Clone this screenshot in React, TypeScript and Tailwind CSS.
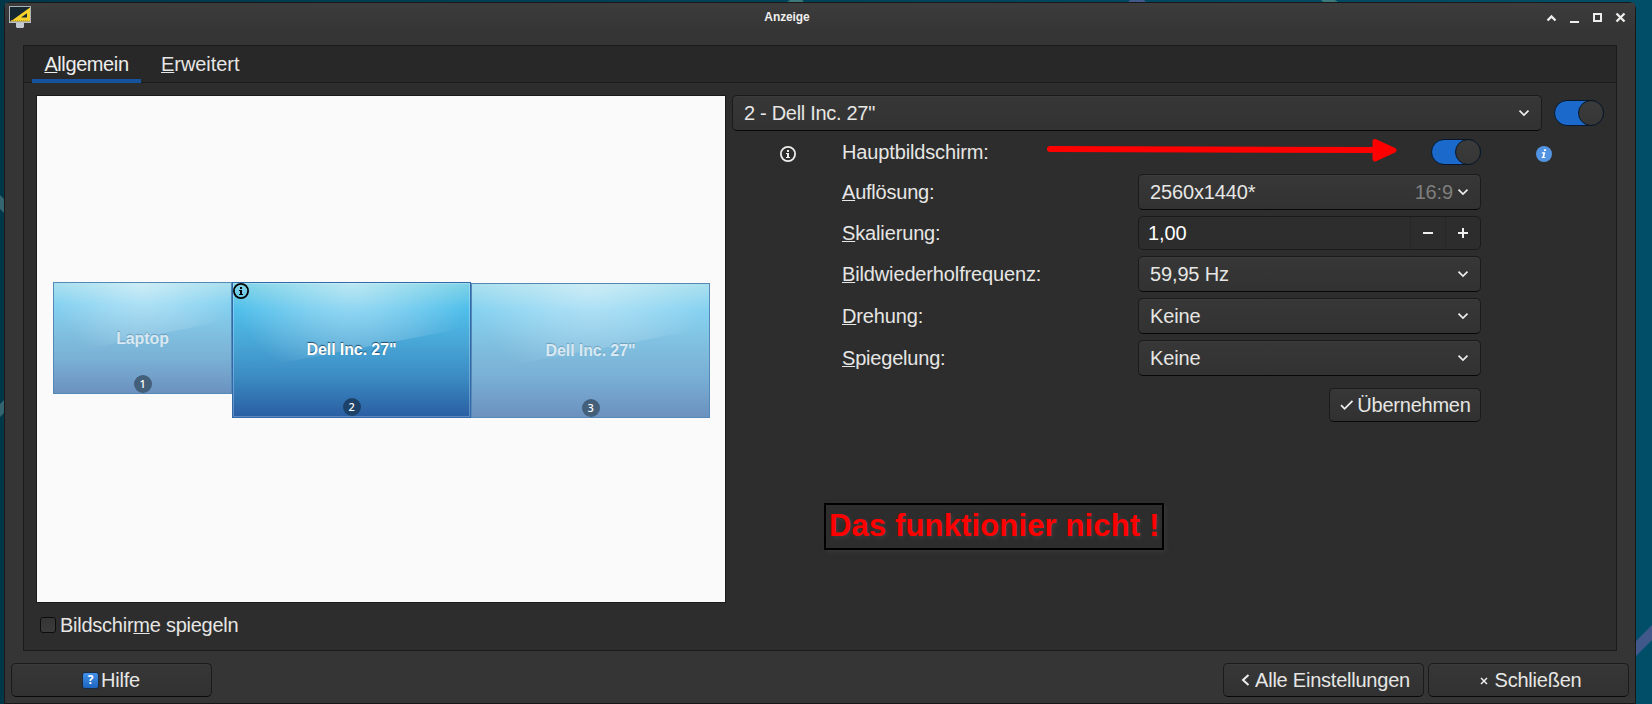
import React, { useState } from 'react';

interface ComboProps {
  value: string;
  hint?: string;
  className?: string;
}

const Chevron: React.FC = () => (
  <svg width="12" height="8" viewBox="0 0 12 8" fill="none" className="shrink-0">
    <path d="M1.5 1.7 L6 6 L10.5 1.7" stroke="#eeeeec" strokeWidth="1.7" />
  </svg>
);

const Combo: React.FC<ComboProps> = ({ value, hint, className = '' }) => (
  <button
    type="button"
    className={`flex h-9 items-center rounded-[5px] border border-[#1b1b1b] border-b-[#070707] bg-linear-to-b from-[#373737] to-[#323232] pr-[11px] pl-[11px] text-left shadow-[inset_0_1px_#3b3b3b] ${className}`}
  >
    <span className="flex-1">{value}</span>
    {hint && <span className="mr-[4px] text-[#7f7f7e]">{hint}</span>}
    <Chevron />
  </button>
);

const Switch: React.FC<{ className?: string }> = ({ className = '' }) => {
  const [on, setOn] = useState(true);
  return (
    <button
      type="button"
      onClick={() => setOn(!on)}
      className={`flex h-[26px] w-[50px] shrink-0 rounded-full border border-[#07172c] ${on ? 'justify-end bg-[#1b6acb]' : 'justify-start bg-[#262626]'} ${className}`}
    >
      <span className="-m-px size-[26px] rounded-full border border-[#0a1624] bg-linear-to-b from-[#3b3b3b] to-[#363636]" />
    </button>
  );
};

const InfoIcon: React.FC<{ color: string }> = ({ color }) => (
  <svg width="16" height="16" viewBox="0 0 16 16" className="block">
    <circle cx="8" cy="8" r="7.1" fill="none" stroke={color} strokeWidth="1.8" />
    <path d="M7 4h2v2H7z M6 7h3v4h1v1H6v-1h1V8H6z" fill={color} />
  </svg>
);

const Label: React.FC<{ text: string; className?: string }> = ({ text, className = '' }) => (
  <div className={className}>
    <span className="underline decoration-1 underline-offset-[1px]">{text[0]}</span>
    {text.slice(1)}
  </div>
);

interface MonitorProps {
  id: number;
  name: string;
  active?: boolean;
  className: string;
}

const Monitor: React.FC<MonitorProps> = ({ id, name, active, className }) => (
  <div className={`relative flex items-center justify-center ${className}`}>
    <svg className="absolute inset-0 size-full" viewBox="0 0 239 136" preserveAspectRatio="none">
      <defs>
        <linearGradient id={`sky${id}`} x1="0" y1="0" x2="0" y2="1">
          <stop offset="0" stopColor={active ? '#7fd3e6' : '#abe0ee'} />
          <stop offset="0.2" stopColor={active ? '#50bfeb' : '#86d2f1'} />
          <stop offset="0.45" stopColor={active ? '#48a6d6' : '#80c0e0'} />
          <stop offset="0.7" stopColor={active ? '#3b8bc2' : '#79afd4'} />
          <stop offset="1" stopColor={active ? '#295da2' : '#6b90bf'} />
        </linearGradient>
        <radialGradient id={`glow${id}`} cx="0.5" cy="0" r="0.5" gradientTransform="scale(1 2.3)">
          <stop offset="0" stopColor="#ffffff" stopOpacity={active ? 0.48 : 0.42} />
          <stop offset="0.5" stopColor="#ffffff" stopOpacity={active ? 0.25 : 0.2} />
          <stop offset="1" stopColor="#ffffff" stopOpacity="0" />
        </radialGradient>
      </defs>
      <rect width="239" height="136" fill={`url(#sky${id})`} />
      <path d="M0 0H239V45Q150 62 0 90Z" fill={`url(#glow${id})`} />
    </svg>
    <div className={`absolute inset-0 border ${active ? 'border-[#2f69ac]' : 'border-[#5488b7]'}`} />
    {active && <div className="absolute inset-px border border-white/25" />}
    {active && (
      <div className="absolute top-px left-px">
        <InfoIcon color="#050505" />
      </div>
    )}
    <span
      className={`relative text-base leading-5 font-bold tracking-[-0.1px] ${active ? 'pb-px text-white [text-shadow:0_-1px_1px_#1d4d70]' : 'pt-px text-[#d9e9f3] [text-shadow:0_-1px_1px_#6c9dbb]'}`}
    >
      {name}
    </span>
    <span
      className={`absolute left-1/2 flex size-[18px] -translate-x-1/2 items-center justify-center rounded-full font-['Noto_Sans'] text-[11px] font-medium text-white ${active ? 'bottom-[2px] bg-[#1d4269]' : 'bottom-px bg-[#435f7a]'}`}
    >
      {id}
    </span>
  </div>
);

const buttonClass =
  'flex h-[34px] items-center justify-center rounded-[5px] border border-[#1b1b1b] border-b-[#090909] bg-linear-to-b from-[#373737] to-[#313131] tracking-[-0.23px] shadow-[inset_0_1px_#3a3a3a]';

const TitleBar: React.FC = () => (
  <header className="flex h-[42px] items-start bg-linear-to-b from-[#3c3c3c] to-[#353535] to-70%">
    <svg width="22" height="22" viewBox="0 0 22 22" className="mt-[3px] ml-1">
      <rect x="0.5" y="0.5" width="21" height="15.5" fill="#182831" stroke="#a9b0b5" />
      <path d="M1.5 15.5L21 1.5V15.5Z M12 11.5h6V7.2Z" fill="#f6d32d" fillRule="evenodd" />
      <path d="M2 14.5h18.5" stroke="#c89b12" strokeWidth="1.2" strokeDasharray="1 1" />
      <path d="M0 16.3h22" stroke="#c5cbd0" strokeWidth="1.2" />
      <path d="M7 17h8v4l-1 1H8l-1-1z" fill="#c4cad0" />
    </svg>
    <div className="ml-[726px] w-[60px] pt-[5px] text-center text-[12px] leading-[18px] font-bold tracking-[-0.1px] text-[#eeeeec]">
      Anzeige
    </div>
    <svg width="80" height="12" viewBox="0 0 80 12" fill="none" className="mt-[9px] ml-[729px] text-[#eeeeec]">
      <path d="M1.5 8.5L5.5 4.5L9.5 8.5" stroke="currentColor" strokeWidth="2.4" />
      <path d="M24 10h9" stroke="currentColor" strokeWidth="2" />
      <path d="M48 4h7v7h-7z" transform="translate(0 -2)" stroke="currentColor" strokeWidth="2" />
      <path d="M70.5 1.5L78.5 9.5M78.5 1.5L70.5 9.5" stroke="currentColor" strokeWidth="2.3" />
    </svg>
  </header>
);

const SettingsPanel: React.FC = () => {
  const [scale, setScale] = useState(1);

  return (
    <section className="relative ml-1.5 w-[873px]">
      <div className="flex items-center">
        <Combo value={'2 - Dell Inc. 27"'} className="w-[810px] tracking-[-0.3px]" />
        <Switch className="ml-3" />
      </div>

      <div className="mt-[8px] flex h-[26px] items-center pl-[48px]">
        <span className="mt-[4px]">
          <InfoIcon color="#eeeeec" />
        </span>
        <div className="ml-[46px] w-[296px]">Hauptbildschirm:</div>
        <Switch className="ml-[293px]" />
        <svg width="16" height="16" viewBox="0 0 16 16" className="mt-[4px] ml-[55px]">
          <circle cx="8" cy="8" r="8" fill="#5294e2" />
          <path d="M8.2 3.2h2l-.4 1.8h-2z M6 6.3h3.3L8.2 11h1.2l-.2 1.1H5.6l.2-1.1h.7l.8-3.6H5.8z" fill="white" />
        </svg>
      </div>

      <div className="mt-[9px] ml-[110px] grid w-[639px] grid-cols-[296px_343px] items-center gap-y-1.5">
        <Label text="Auflösung:" className="tracking-[-0.22px]" />
        <Combo value="2560x1440*" hint="16:9" />
        <Label text="Skalierung:" />
        <div className="flex h-[34px] items-stretch rounded-[5px] border border-[#1b1b1b] bg-[#2d2d2d]">
          <span className="flex flex-1 items-center pl-[9px] text-white">{scale.toFixed(2).replace('.', ',')}</span>
          <button
            type="button"
            onClick={() => setScale(scale - 0.05)}
            className="flex w-[35px] items-center justify-center border-l border-[#272727]"
          >
            <svg width="10" height="10" viewBox="0 0 10 10">
              <path d="M0 5h10" stroke="#eeeeec" strokeWidth="2" />
            </svg>
          </button>
          <button
            type="button"
            onClick={() => setScale(scale + 0.05)}
            className="flex w-[35px] items-center justify-center border-l border-[#272727]"
          >
            <svg width="10" height="10" viewBox="0 0 10 10">
              <path d="M0 5h10M5 0v10" stroke="#eeeeec" strokeWidth="2" />
            </svg>
          </button>
        </div>
        <Label text="Bildwiederholfrequenz:" />
        <Combo value="59,95 Hz" />
        <Label text="Drehung:" />
        <Combo value="Keine" />
        <Label text="Spiegelung:" className="tracking-[-0.2px]" />
        <Combo value="Keine" />
      </div>

      <div className="mt-3 flex w-[749px] justify-end">
        <button type="button" className={`${buttonClass} w-[152px]`}>
          <svg width="14" height="12" viewBox="0 0 14 12" fill="none" className="mr-[3px] ml-px">
            <path d="M1 6.2L4.6 9.8L12.5 1.8" stroke="#eeeeec" strokeWidth="1.8" />
          </svg>
          Übernehmen
        </button>
      </div>

      <div className="mt-[81px] ml-[92px] h-[47px] w-[340px] border-2 border-black pl-[3px] text-[31px] leading-[41px] font-bold tracking-[0.14px] whitespace-nowrap text-[#ff0000] shadow-[2px_2px_4px_#383838] [text-shadow:2px_2px_4px_#3c3c3c]">
        Das funktionier nicht !
      </div>

      {/* arrow pointing at the primary display switch */}
      <svg width="352" height="26" viewBox="0 0 352 26" className="absolute top-[43px] left-[315px]">
        <path d="M3 11L325 12" stroke="#ff0000" strokeWidth="6" strokeLinecap="round" />
        <path d="M328 3.5L347 12.2L328 21Z" fill="#ff0000" stroke="#ff0000" strokeWidth="5" strokeLinejoin="round" />
      </svg>
    </section>
  );
};

export default function App() {
  return (
    <div className="relative h-[704px] w-[1652px] overflow-hidden bg-linear-to-r from-[#00384a] to-[#004e68] pt-[2px] pl-[4px] font-['Liberation_Sans',sans-serif] text-[20px] leading-6 tracking-[-0.14px] text-[#e6e6e4]">
      <svg width="1652" height="704" viewBox="0 0 1652 704" className="absolute inset-0">
        <path d="M1636 641L1652 625V640L1636 656Z" fill="#41598a" />
        <path d="M1130 0h14l2 2h-18z" fill="#41598a" />
        <path d="M787 2h17l-2-2h-12z M1321 0h14l3 2h-15z" fill="#3b7a78" />
        <path d="M0 195l4 4v14l-4-4z M0 404l4-4v13l-4 4z" fill="#33646f" />
      </svg>

      <div className="relative h-[702px] w-[1632px] rounded-t-[7px] border border-[#181818] bg-[#353535]">
        <TitleBar />

        <main className="ml-[18px] h-[606px] w-[1594px] border border-[#1b1b1b] bg-[#2d2d2d]">
          <nav className="flex h-[37px] border-b border-[#1b1b1b] bg-[#282828] pl-2">
            <Label
              text="Allgemein"
              className="h-[37px] w-[109px] border-b-4 border-[#15539e] pt-[6px] text-center tracking-[-0.4px] text-[#eeeeec]"
            />
            <Label text="Erweitert" className="ml-[20px] pt-[6px] tracking-[-0.05px]" />
          </nav>

          <div className="flex pt-3 pl-3">
            <div>
              <div className="h-[508px] w-[690px] border border-[#1b1b1b] bg-[#fafafa] pt-[186px] pl-4">
                <div className="flex items-start">
                  <Monitor id={1} name="Laptop" className="h-[112px] w-[179px]" />
                  <Monitor id={2} name={'Dell Inc. 27"'} active className="h-[136px] w-[239px]" />
                  <Monitor id={3} name={'Dell Inc. 27"'} className="mt-px h-[135px] w-[239px]" />
                </div>
              </div>
              <label className="mt-[10px] flex items-center pl-1">
                <span className="mr-1 size-4 rounded-[3px] border border-[#0d0d0d] bg-linear-to-b from-[#363636] to-[#3b3b3b]" />
                <span className="tracking-[-0.25px]">
                  Bildschir<span className="underline decoration-1 underline-offset-[1px]">m</span>e spiegeln
                </span>
              </label>
            </div>
            <SettingsPanel />
          </div>
        </main>

        <footer className="mt-3 flex pl-1.5">
          <button type="button" className={`${buttonClass} w-[201px]`}>
            <span className="mr-[3px] flex size-[15px] items-center justify-center rounded-[2px] bg-linear-to-b from-[#4391e8] to-[#1c65c0] font-['Noto_Sans'] text-[12px] font-bold text-white shadow-[0_0_0_1px_#1c2c40]">
              ?
            </span>
            Hilfe
          </button>
          <button type="button" className={`${buttonClass} ml-[1011px] w-[201px]`}>
            <svg width="9" height="12" viewBox="0 0 9 12" fill="none" className="mr-[5px] ml-[4px]">
              <path d="M7.5 1L2 6L7.5 11" stroke="#eeeeec" strokeWidth="2" />
            </svg>
            Alle Einstellungen
          </button>
          <button type="button" className={`${buttonClass} ml-1 w-[201px]`}>
            <svg width="8" height="8" viewBox="0 0 8 8" fill="none" className="mt-[2px] mr-[7px] ml-[4px]">
              <path d="M1 1L7 7M7 1L1 7" stroke="#eeeeec" strokeWidth="1.5" />
            </svg>
            Schließen
          </button>
        </footer>
      </div>
    </div>
  );
}
